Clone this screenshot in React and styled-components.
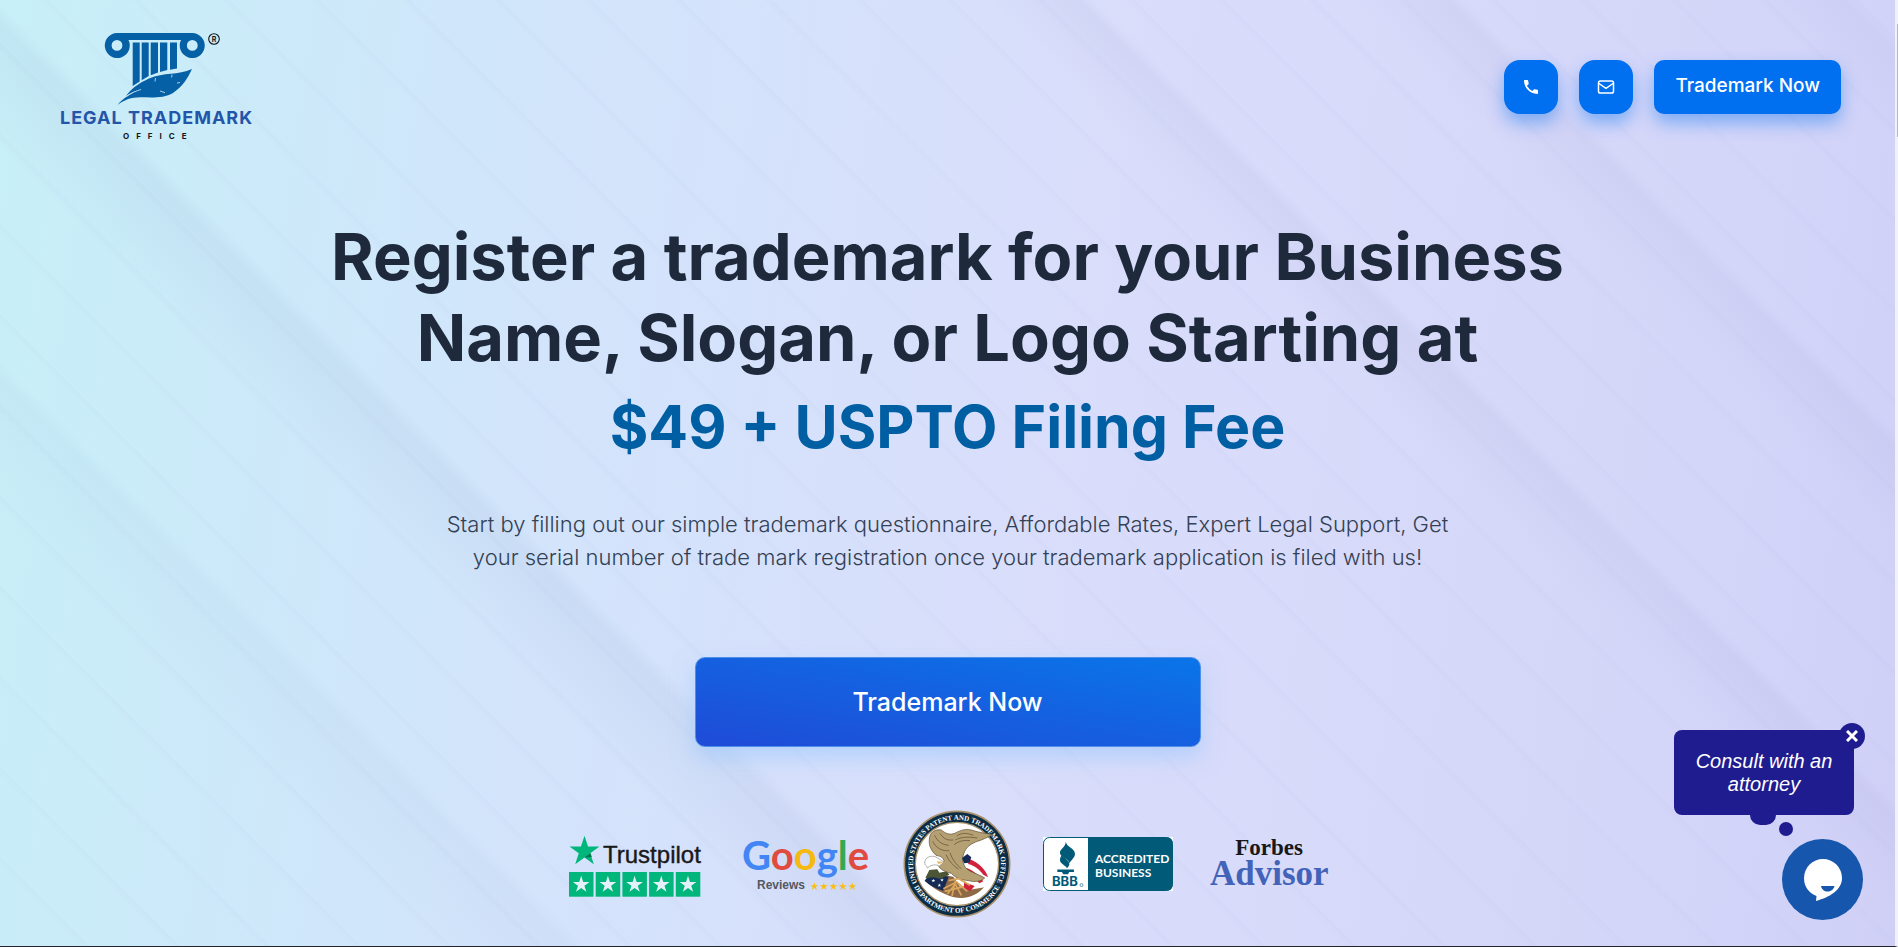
import React from "react";
import styled, { createGlobalStyle } from "styled-components";

const GlobalStyle = createGlobalStyle`
  *, *::before, *::after { box-sizing: border-box; }
  body { margin: 0; font-family: Inter, "Liberation Sans", sans-serif; }
  h1, p, ul { margin: 0; padding: 0; }
`;

const Page = styled.div`
  position: relative;
  min-height: 100vh;
  display: flex;
  flex-direction: column;
  padding-bottom: 24px;
  border-right: 3px solid #f1f1f6;
  border-bottom: 1px solid #24242c;
  background:
    linear-gradient(
      45deg,
      rgba(150, 175, 210, 0) 0%,
      rgba(150, 175, 210, 0) 15%,
      rgba(150, 175, 210, 0.09) 20%,
      rgba(150, 175, 210, 0) 20.6%,
      rgba(150, 175, 210, 0) 28%,
      rgba(150, 175, 210, 0.15) 32.4%,
      rgba(150, 175, 210, 0) 33.2%,
      rgba(165, 165, 210, 0) 68%,
      rgba(165, 165, 210, 0.14) 71.2%,
      rgba(165, 165, 210, 0) 71.8%,
      rgba(165, 165, 210, 0) 81%,
      rgba(165, 165, 210, 0.13) 84.2%,
      rgba(165, 165, 210, 0) 84.8%,
      rgba(165, 165, 210, 0) 95%,
      rgba(165, 165, 210, 0.1) 98.2%,
      rgba(165, 165, 210, 0) 98.6%
    ),
    repeating-linear-gradient(
      45deg,
      rgba(150, 160, 205, 0) 0px,
      rgba(150, 160, 205, 0) 56px,
      rgba(150, 160, 205, 0.05) 62px,
      rgba(150, 160, 205, 0) 64px
    ),
    linear-gradient(
      98deg,
      #c7f0f8 0%,
      #cceaf9 14%,
      #d2e5fb 28%,
      #d6e1fb 42%,
      #d9defb 54%,
      #d8dafa 70%,
      #d4d6f9 86%,
      #d0d0f7 100%
    );
`;

const ScrollThumb = styled.div`
  position: absolute;
  top: 24px;
  right: -3px;
  width: 1px;
  height: 113px;
  background: #b9b9c0;
`;

const Header = styled.header`
  display: flex;
  align-items: center;
  justify-content: space-between;
  padding: 32px 54px 0 60px;
`;

const HomeLink = styled.a`
  display: block;
  line-height: 0;
`;

const Actions = styled.nav`
  display: flex;
  align-items: center;
  gap: 21px;
  padding-top: 2px;
`;

const HeaderButton = styled.button`
  height: 54px;
  min-width: 54px;
  padding: ${(p) => (p.$icon ? "0" : "0 21px 3px")};
  display: flex;
  align-items: center;
  justify-content: center;
  border: 0;
  border-radius: ${(p) => (p.$icon ? "16px" : "10px")};
  background: #006ff0;
  color: #fff;
  font: 500 19px Inter, sans-serif;
  box-shadow: 0 9px 18px rgba(0, 111, 240, 0.42);
  cursor: pointer;
`;

const Hero = styled.main`
  display: flex;
  flex-direction: column;
  align-items: center;
  padding: 76px 24px 0;
  text-align: center;
`;

const Title = styled.h1`
  max-width: 1280px;
  color: #1e293b;
  font-size: 65px;
  line-height: 81px;
  font-weight: 700;
`;

const Price = styled.span`
  display: block;
  margin-top: 8px;
  color: #005ea2;
  font-size: 59px;
  line-height: 82px;
`;

const Lead = styled.p`
  max-width: 1030px;
  margin-top: 40px;
  color: #334155;
  font-size: 22px;
  line-height: 33px;
  font-weight: 300;
`;

const CallToAction = styled.button`
  width: 100%;
  max-width: 506px;
  height: 90px;
  margin-top: 83px;
  padding: 0;
  border: 1px solid #4f8fe8;
  border-radius: 10px;
  background: linear-gradient(to top right, #1f4bd8, #1560e0 50%, #0a75e8);
  color: #fff;
  font: 500 25px Inter, sans-serif;
  box-shadow: 0 10px 22px rgba(147, 197, 253, 0.55);
  cursor: pointer;
`;

const Badges = styled.ul`
  display: flex;
  flex-wrap: wrap;
  align-items: center;
  justify-content: center;
  gap: 32px;
  margin-top: 63px;
  list-style: none;
  line-height: 0;
`;

const Chat = styled.aside`
  position: fixed;
  right: 35px;
  bottom: 27px;
  display: flex;
  flex-direction: column;
  align-items: flex-end;
`;

const Bubble = styled.div`
  position: relative;
  width: 180px;
  margin: 0 9px 24px 0;
  padding: 20px 16px 19px;
  border-radius: 8px;
  background: #1f1c8f;
  color: #fff;
  font: italic 20px/23px "Liberation Sans", Arial, sans-serif;
  text-align: center;

  &::before {
    content: "";
    position: absolute;
    top: 100%;
    left: 76px;
    width: 26px;
    height: 10px;
    border-radius: 0 0 13px 13px;
    background: #1f1c8f;
  }

  &::after {
    content: "";
    position: absolute;
    top: calc(100% + 7px);
    left: 105px;
    width: 14px;
    height: 14px;
    border-radius: 50%;
    background: #1f1c8f;
  }
`;

const CloseButton = styled.button`
  position: absolute;
  top: -7px;
  right: -11px;
  width: 26px;
  height: 26px;
  padding: 0;
  display: grid;
  place-items: center;
  border: 0;
  border-radius: 50%;
  background: #1f1c8f;
  cursor: pointer;
`;

const Launcher = styled.button`
  width: 81px;
  height: 81px;
  padding: 0;
  border: 0;
  border-radius: 50%;
  background: #1656ac;
  line-height: 0;
  cursor: pointer;
`;

const starPoints = (cx, cy, r, inner = 0.382) =>
  Array.from({ length: 10 }, (_, i) => {
    const radius = i % 2 ? r * inner : r;
    const a = (Math.PI / 5) * i - Math.PI / 2;
    return `${(cx + radius * Math.cos(a)).toFixed(2)},${(cy + radius * Math.sin(a)).toFixed(2)}`;
  }).join(" ");

const Star = ({ cx, cy, r, fill }) => <polygon points={starPoints(cx, cy, r)} fill={fill} />;

const CompanyLogo = () => (
  <svg width="192" height="108" viewBox="0 0 192 108" role="img" aria-label="Legal Trademark Office">
    <g fill="#0560a6">
      <path
        fillRule="evenodd"
        d="M57 1H132.300A12.500 12.500 0 1 1 121 8H68.500A12.500 12.500 0 1 1 57 1ZM57 8A5.400 5.400 0 1 0 57 18.800A5.400 5.400 0 1 0 57 8ZM132.300 8A5.400 5.400 0 1 0 132.300 18.800A5.400 5.400 0 1 0 132.300 8Z"
      />
      <path d="M72.700 10.500h7v39l-7 4.500zM81.700 10.500h7v33.500l-7 4.300zM90.700 10.500h7.300v30l-7.300 2.700zM100 10.500h7.300v27.500l-7.300 2zM110 10.500h7v26l-7 1.300z" />
      <path d="M132 37C118 43.500 104 40 89 46.500C78 51.500 71 57 66 64C69 62 73 60 78 58C70 62 62 67 57.500 73C65 67.500 71 65.500 80 65.300C92 65.500 104 66.500 113 61C122 55 128 46 132 37Z" />
    </g>
    <path d="M66.500 64.500C71 61 76 59 81 57.500M95.500 46l-.5 3.500M112 42.500l-.4 3M100 59l5 1.700M117 51l3-.5" stroke="#cdebf8" strokeWidth="0.800" fill="none" />
    <circle cx="154" cy="7" r="5.300" fill="none" stroke="#101820" strokeWidth="1.100" />
    <text x="154" y="10" textAnchor="middle" fontFamily="Inter, sans-serif" fontSize="7" fontWeight="700" fill="#101820">R</text>
    <text x="0" y="92" fontFamily="Inter, sans-serif" fontSize="18" fontWeight="700" letterSpacing="1" fill="#2355a8">LEGAL TRADEMARK</text>
    <text x="63" y="107" fontFamily="Inter, sans-serif" fontSize="8" fontWeight="700" letterSpacing="7" fill="#101820">OFFICE</text>
  </svg>
);

const PhoneIcon = () => (
  <svg width="16" height="16" viewBox="0 0 16 16" aria-hidden="true">
    <path d="M1.500 1H4.500Q5 1 5.100 1.500L5.700 4.500Q5.800 4.900 5.500 5.200L3.900 6.800Q5.800 10.300 9.300 12L10.800 10.400Q11.100 10.100 11.500 10.200L14.500 10.800Q15 10.900 15 11.400V14.300Q15 15 14.300 15C6.500 14.600 1.300 9 1 1.600Q1 1 1.500 1Z" fill="#fff" />
  </svg>
);

const MailIcon = () => (
  <svg width="18" height="16" viewBox="0 0 18 16" fill="none" stroke="#fff" strokeWidth="1.500" strokeLinecap="round" strokeLinejoin="round" aria-hidden="true">
    <rect x="1.500" y="2" width="15" height="12" rx="1.800" />
    <path d="M2 4.500L9 9.300L16 4.500" />
  </svg>
);

const TrustpilotLogo = () => (
  <svg width="145" height="66" viewBox="0 0 145 66" role="img" aria-label="Trustpilot">
    <Star cx={18.5} cy={20.5} r={15.8} fill="#00b67a" />
    <path d="M18.500 26.600L24.500 22.200L25.800 26Z" fill="#00734a" />
    <text x="37" y="32" fontFamily="'Liberation Sans', Arial, sans-serif" fontSize="24" fill="#191919" stroke="#191919" strokeWidth="0.400">Trustpilot</text>
    {[0, 1, 2, 3, 4].map((i) => (
      <g key={i}>
        <rect x={3 + i * 26.700} y="41" width="24.500" height="24.700" fill="#00b67a" />
        <Star cx={15.2 + i * 26.700} cy={53.600} r={8.800} fill="#e4f1fb" />
      </g>
    ))}
  </svg>
);

const GoogleLogo = () => (
  <svg width="128" height="64" viewBox="0 0 128 64" role="img" aria-label="Google Reviews">
    <text x="-1" y="38" fontFamily="Lato, sans-serif" fontSize="40" fontWeight="700">
      <tspan fill="#4285f4">G</tspan>
      <tspan fill="#e04a3f">o</tspan>
      <tspan fill="#f5b912">o</tspan>
      <tspan fill="#4285f4">g</tspan>
      <tspan fill="#34a853">l</tspan>
      <tspan fill="#e04a3f">e</tspan>
    </text>
    <text x="14" y="57" fontFamily="'Liberation Sans', Arial, sans-serif" fontSize="12" fontWeight="700" fill="#55585e">Reviews</text>
    {[0, 1, 2, 3, 4].map((i) => (
      <Star key={i} cx={71.300 + i * 9.500} cy={54.500} r={4.200} fill="#fbbc14" />
    ))}
  </svg>
);

const PatentOfficeSeal = () => (
  <svg width="108" height="108" viewBox="39 28 324 324" role="img" aria-label="United States Patent and Trademark Office seal">
    <defs>
      <path id="seal-top" d="M109 284A132 132 0 1 1 293 284" />
      <path id="seal-bottom" d="M55 190A146 146 0 0 0 347 190" />
    </defs>
    <circle cx="201" cy="190" r="158" fill="#0c2c44" stroke="#a8906a" strokeWidth="5" />
    <circle cx="201" cy="190" r="125" fill="#fff" stroke="#a8906a" strokeWidth="4" />
    <g fill="#fff" fontFamily="'Liberation Serif', serif" fontSize="21" fontWeight="700" textAnchor="middle">
      <text><textPath href="#seal-top" startOffset="50%">UNITED STATES PATENT AND TRADEMARK OFFICE</textPath></text>
      <text><textPath href="#seal-bottom" startOffset="50%">DEPARTMENT OF COMMERCE</textPath></text>
    </g>
    <path d="M104 240L124 216L190 228L212 262L262 258L296 236C286 262 262 284 232 290C196 298 150 280 104 240Z" fill="#8d6a45" />
    <path d="M104 240L122 218L176 228L160 270C138 264 118 254 104 240Z" fill="#152a55" />
    <Star cx={130} cy={240} r={6} fill="#fff" />
    <Star cx={148} cy={254} r={6} fill="#fff" />
    <Star cx={156} cy={238} r={6} fill="#fff" />
    <path d="M106 232L118 208L142 206L148 216L170 212L178 222L150 234L132 230Z" fill="#4c5536" />
    <path d="M230 172C256 176 290 204 298 238L284 260L236 268L222 230L228 200Z" fill="#fff" />
    <path d="M240 176C266 186 288 208 294 230L280 222C268 206 252 194 234 190ZM230 202C250 210 268 224 280 242L268 248C256 234 242 224 226 220ZM222 244L254 256L242 270L222 264Z" fill="#d4213b" />
    <path
      d="M118 118C118 96 134 84 154 88C166 98 178 104 194 98C206 92 224 82 244 88C268 96 288 98 308 102C288 112 276 118 262 122C246 128 232 136 224 152C216 170 216 184 226 200C236 214 262 218 284 232C272 244 252 244 236 240C216 238 198 234 184 218C166 214 150 206 146 196L162 180C158 168 148 166 138 164C126 152 116 138 118 118Z"
      fill="#b5a074"
      stroke="#5b4a2c"
      strokeWidth="2"
    />
    <path d="M216 172L232 160L244 170L238 186L222 188Z" fill="#152a55" />
    <path d="M134 104C142 122 156 132 176 134M128 122C138 142 156 152 178 150M150 98C160 114 172 120 190 118M200 106C214 96 232 96 250 104M196 118C214 108 236 108 262 112M192 132C208 120 222 118 240 120M168 162C176 180 190 196 206 206M180 156C186 174 196 190 214 204" fill="none" stroke="#5b4a2c" strokeWidth="2" />
    <path d="M104 186C106 170 120 164 136 168L162 184L148 196C138 190 124 192 112 202C112 196 104 194 104 186Z" fill="#fff" stroke="#8b8b86" strokeWidth="2" />
    <path d="M140 182L162 184L146 190Z" fill="#e3b25a" />
    <path d="M176 240L206 234L240 254M160 264L200 244L232 272M172 280L196 250L214 284M164 272L222 258M196 240L186 286" fill="none" stroke="#d9a45c" strokeWidth="5" />
  </svg>
);

const AccreditedBusinessLogo = () => (
  <svg width="130" height="64" viewBox="0 0 130 64" role="img" aria-label="BBB Accredited Business">
    <rect y="5" width="130" height="54" fill="#fff" />
    <rect x="0.500" y="5.500" width="129" height="53" rx="6" fill="#fff" stroke="#005a78" />
    <path d="M45 5.500H124Q129.500 5.500 129.500 11V53Q129.500 58.500 124 58.500H45Z" fill="#005a78" />
    <g transform="translate(-13 -12) scale(0.333)" fill="#005a78">
      <path d="M107 65C112 84 136 84 135 103C134 114 124 120 118 130C118 116 92 114 90 100C88 86 108 82 107 65Z" />
      <path d="M95 106C104 116 120 122 118 134C117 139 114 142 111 145C108 136 90 132 90 120C90 114 93 110 95 106Z" />
      <path d="M82 149H132V156H118L114 163H100L96 156H82Z" />
    </g>
    <text x="9" y="54" fontFamily="Inter, sans-serif" fontSize="13" fontWeight="700" fill="#005a78">BBB</text>
    <circle cx="38.500" cy="53" r="1.500" fill="none" stroke="#005a78" strokeWidth="0.600" />
    <g fontFamily="Lato, sans-serif" fontSize="12" fontWeight="700" fill="#fff">
      <text x="52" y="31">ACCREDITED</text>
      <text x="52" y="45">BUSINESS</text>
    </g>
  </svg>
);

const ForbesLogo = () => (
  <svg width="124" height="64" viewBox="0 0 124 64" role="img" aria-label="Forbes Advisor">
    <g fontFamily="'Liberation Serif', 'Times New Roman', serif" fontWeight="700">
      <text x="64" y="23" textAnchor="middle" fontSize="23" fill="#181818">Forbes</text>
      <text x="5" y="53" fontSize="35" fill="#4263b8">Advisor</text>
    </g>
  </svg>
);

const CloseIcon = () => (
  <svg width="12" height="12" viewBox="0 0 12 12" stroke="#fff" strokeWidth="3" aria-hidden="true">
    <path d="M1 1L11 11M11 1L1 11" />
  </svg>
);

const ChatIcon = () => (
  <svg width="40" height="42" viewBox="0 0 40 42" aria-hidden="true">
    <path d="M20 0A19 19 0 0 1 39 19C39 31 27 38 13 42L13.500 37C6 34 1 28 1 19A19 19 0 0 1 20 0Z" fill="#fff" />
    <path d="M18 27H31.500C30.500 31 27.500 32.500 24.500 32.500C21.500 32.500 18.500 30.500 18 27Z" fill="#1656ac" />
  </svg>
);

const badges = [TrustpilotLogo, GoogleLogo, PatentOfficeSeal, AccreditedBusinessLogo, ForbesLogo];

export default function App() {
  return (
    <>
      <GlobalStyle />
      <Page>
        <ScrollThumb />
        <Header>
          <HomeLink href="#" aria-label="Legal Trademark Office">
            <CompanyLogo />
          </HomeLink>
          <Actions>
            <HeaderButton $icon type="button" aria-label="Call us"><PhoneIcon /></HeaderButton>
            <HeaderButton $icon type="button" aria-label="Email us"><MailIcon /></HeaderButton>
            <HeaderButton type="button">Trademark Now</HeaderButton>
          </Actions>
        </Header>
        <Hero>
          <Title>
            Register a trademark for your Business Name, Slogan, or Logo Starting at
            <Price>$49 + USPTO Filing Fee</Price>
          </Title>
          <Lead>
            Start by filling out our simple trademark questionnaire, Affordable Rates, Expert Legal Support, Get
            your serial number of trade mark registration once your trademark application is filed with us!
          </Lead>
          <CallToAction type="button">Trademark Now</CallToAction>
          <Badges>
            {badges.map((Badge, i) => (
              <li key={i}><Badge /></li>
            ))}
          </Badges>
        </Hero>
        <Chat aria-label="Live chat">
          <Bubble>
            Consult with an attorney
            <CloseButton type="button" aria-label="Close message"><CloseIcon /></CloseButton>
          </Bubble>
          <Launcher type="button" aria-label="Open chat"><ChatIcon /></Launcher>
        </Chat>
      </Page>
    </>
  );
}
